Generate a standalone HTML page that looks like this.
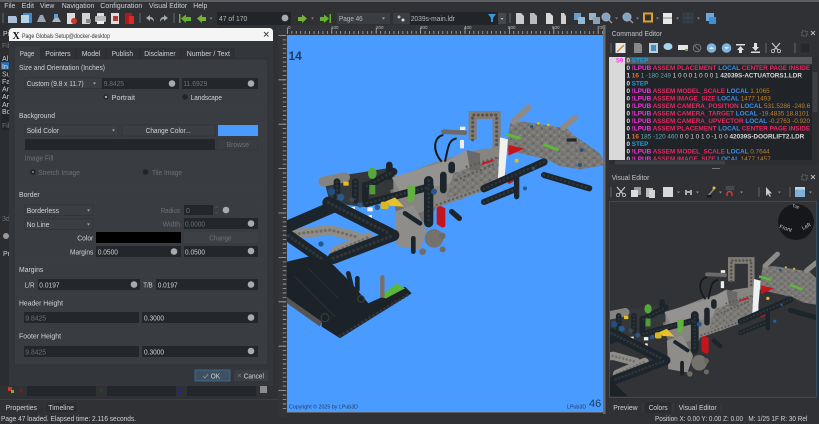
<!DOCTYPE html>
<html><head><meta charset="utf-8"><style>
html,body{margin:0;padding:0;background:#2f3135;overflow:hidden}
svg{display:block;filter:blur(.25px)}
text{font-family:"Liberation Sans",sans-serif;white-space:pre}
.t{font-size:7px;fill:#d0d3d6}
.d{font-size:7px;fill:#6e7175}
.s{font-size:7.2px;fill:#b9bcbf}
.f{fill:#23262a}
.b{fill:#3b3e43;stroke:#2c2e32;stroke-width:.5}
.g{fill:none;stroke:#3d4045;stroke-width:.6}
.c{font-family:"Liberation Sans",sans-serif;font-size:6.35px;font-weight:bold}
.m{fill:#ff30e0}.r{fill:#e8285f}.l{fill:#3f8fe8}.o{fill:#c0802f}.w{fill:#d8dadc}.n{fill:#6aa5b5}.y{fill:#1e9fe0}
.dk{fill:none;stroke:#1c252b;stroke-linecap:round}
.gy{fill:none;stroke:#85837f;stroke-linecap:round}
.hole{fill:none;stroke:#2f353a;stroke-linecap:round;stroke-dasharray:.1 13}
</style></head><body>
<svg width="819" height="424" viewBox="0 0 819 424" xmlns="http://www.w3.org/2000/svg">
<defs>
<clipPath id="pg"><rect x="287" y="35" width="316" height="377"/></clipPath>
<clipPath id="ve"><rect x="610" y="202" width="206" height="195"/></clipPath>
<clipPath id="ed"><rect x="609" y="57" width="203" height="103"/></clipPath>
<pattern id="mot" width="26" height="22" patternUnits="userSpaceOnUse"><rect x="2" y="3" width="7" height="6" fill="#636362"/><rect x="14" y="13" width="6" height="6" fill="#6a6a69"/><rect x="16" y="2" width="6" height="4" fill="#8f8e8b"/><rect x="4" y="14" width="5" height="5" fill="#8c8b88"/></pattern>
<g id="mR">
<polygon points="690,100 730,95 860,115 880,135 960,190 975,225 900,238 840,228 800,208 680,180" fill="#797874"/>
<polygon points="690,100 730,95 860,115 880,135 960,190 975,225 900,238 840,228 800,208 680,180" fill="url(#mot)"/>
<path class="dk" stroke-width="18" d="M792,255L928,295"/>
<path class="hole" stroke-width="8" d="M792,255L928,295"/>
<circle cx="905" cy="180" r="6" fill="#28547e"/><circle cx="900" cy="225" r="6" fill="#28547e"/>
<path stroke="#26292b" stroke-width="10" d="M860,150L890,150"/>
</g>
<g id="mM">
<path class="gy" stroke-width="18" d="M700,95L745,52M850,112L884,84" style="stroke:#8d8b87"/>
<polygon points="130,265 340,232 350,300 262,352 150,338" fill="#34383b"/>
<polygon points="330,300 470,260 520,300 470,350 440,400 350,370" fill="#6f6e6c"/>
<path fill="none" stroke="#817c75" stroke-width="24" d="M578,150V75H650V190"/>
<path class="hole" stroke-width="9" d="M578,150V75H650V190" style="stroke:#55514d"/>
<polygon points="340,265 470,215 590,180 660,170 680,260 560,310 470,350 400,375 340,330" fill="#868582"/>
<polygon points="335,262 500,213 560,180 595,195 600,255 510,280 365,312" fill="#949391"/>
<polygon points="520,250 660,200 665,262 540,330 500,320" fill="#7b7a76"/>
<polygon points="520,250 660,200 680,262 540,330 500,320" fill="url(#mot)"/>
<polygon points="560,180 600,190 600,240 570,240" fill="#6a6967"/>
<path class="gy" stroke-width="14" d="M490,125L555,128" style="stroke:#6c6b69"/>
<rect x="540" y="110" width="16" height="10" fill="#eee"/>
<rect x="540" y="150" width="12" height="25" fill="#eee"/>
<path d="M485,215C455,180 462,140 490,135M495,215C505,170 505,150 530,145" fill="none" stroke="#14191c" stroke-width="6"/>
<path class="gy" stroke-width="14" d="M470,345L640,285"/>
<path class="hole" stroke-width="7" d="M470,345L640,285M530,270L650,220M560,230L660,200" style="stroke:#5a5a58"/>
<polygon points="660,142 684,148 674,262 654,266" fill="#eff0f0"/>
<polygon points="685,165 733,176 685,197" fill="#c6141c"/>
<path stroke="#c01d22" stroke-width="6" d="M606,222L640,211"/>
<path stroke="#b2161c" stroke-width="10" d="M684,278L702,268"/>
<path stroke="#5fb83a" stroke-width="9" d="M678,133L722,145M790,163L836,180"/>
<path class="dk" stroke-width="22" d="M612,296L792,216"/>
<path class="dk" stroke-width="18" d="M612,336L705,298"/>
<path class="dk" stroke-width="16" d="M710,250V320M515,365L538,385"/>
<path class="hole" stroke-width="8" d="M612,296L792,216M612,336L705,298"/>
<circle cx="760" cy="235" r="5" fill="#28547e"/><circle cx="735" cy="295" r="6" fill="#1f5f96"/><circle cx="755" cy="110" r="5" fill="#28547e"/>
<circle cx="710" cy="212" r="6" fill="#e0bb20"/><circle cx="775" cy="100" r="4" fill="#e0bb20"/><circle cx="805" cy="105" r="4" fill="#e0bb20"/>
<path class="gy" stroke-width="30" d="M130,275L195,262"/>
<path class="dk" stroke-width="22" d="M261,288L341,245"/>
<path class="dk" stroke-width="22" d="M261,340L451,290"/>
<path class="dk" stroke-width="28" d="M446,272V398"/>
<path class="dk" stroke-width="20" d="M171,275V330M226,275V330M256,285V330M328,225V260M515,225V240M490,255V300"/>
<path class="hole" stroke-width="8" d="M261,288L341,245M261,340L451,290M446,272V398M171,275V330M226,275V330"/>
<ellipse cx="277" cy="250" rx="13" ry="17" fill="#56a83a"/><rect x="268" y="285" width="18" height="28" fill="#4f9d35"/>
<path fill="#5fb140" d="M382,288h24v20l-6,28h-16z"/>
<polygon points="315,335 345,322 372,350 330,348" fill="#e7c12b"/>
<rect x="302" y="335" width="24" height="22" rx="6" fill="#d9b81f"/>
<rect x="190" y="275" width="16" height="12" fill="#e3bd22"/><rect x="360" y="382" width="14" height="18" fill="#e3bd22"/>
<polygon points="205,352 225,350 225,368 208,368" fill="#f1f1f1"/><rect x="262" y="352" width="16" height="12" fill="#f1f1f1"/><rect x="266" y="375" width="10" height="24" fill="#eee"/>
<circle cx="155" cy="305" r="11" fill="#234f7c"/><circle cx="182" cy="322" r="11" fill="#2a5a8a"/><circle cx="240" cy="345" r="8" fill="#2a5a8a"/><circle cx="292" cy="352" r="8" fill="#2a5a8a"/><circle cx="123" cy="462" r="8" fill="#1f5a96"/><circle cx="462" cy="305" r="9" fill="#27568a"/><circle cx="215" cy="330" r="8" fill="#3a4a55"/>
<polygon points="345,365 400,345 440,420 420,480 350,468" fill="#8e8d8a"/>
<path class="dk" stroke-width="14" d="M400,445V485M375,370L420,400"/>
<circle cx="462" cy="445" r="28" fill="#75726e"/><circle cx="487" cy="438" r="10" fill="#6d6a66"/><circle cx="488" cy="478" r="9" fill="#6d6a66"/><circle cx="428" cy="485" r="10" fill="#706d68"/>
<path d="M470,358Q470,348 482,348L496,355V405Q496,414 485,412L470,402Z" fill="#c4141e"/>
<path class="gy" stroke-width="30" d="M45,432L151,420L235,442M165,485L265,442" style="stroke:#8f8d88"/>
<path class="hole" stroke-width="9" d="M45,432L151,420L235,442M165,485L265,442" style="stroke:#6f6d69"/>
<path class="dk" stroke-width="36" d="M10,415L161,350"/>
<path class="dk" stroke-width="36" d="M145,338L331,432"/>
<path class="dk" stroke-width="34" d="M160,505L341,436"/>
<path class="dk" stroke-width="34" d="M15,430L130,510"/>
<path class="hole" stroke-width="10" d="M145,338L331,432M160,505L341,436M15,430L130,510"/>
</g>
<g id="model" transform="translate(280 90) scale(.3333)">
<use href="#mR"/>
<use href="#mM"/>
<polygon points="0,520 85,500 150,515 215,580 265,640 375,590 395,610 180,745 125,710 125,695 0,610" fill="#1b2329"/>
<path stroke="#2b3237" stroke-width="3" d="M85,535L175,625M45,560L165,680"/>
<polygon points="5,610 125,695 120,710 0,625" fill="#555"/>
<path class="hole" stroke-width="9" d="M180,738L390,610"/>
<circle cx="135" cy="683" r="12" fill="none" stroke="#39424a" stroke-width="3"/><circle cx="243" cy="627" r="10" fill="none" stroke="#39424a" stroke-width="3"/>
<path class="dk" stroke-width="14" d="M232,565V600M205,550L215,590"/>
<polygon points="300,620 350,580 375,595 318,625" fill="#5ab53a"/>
<path stroke="#7b6f63" stroke-width="13" stroke-linecap="round" d="M307,562V617"/>
</g>
</defs>

<rect width="819" height="424" fill="#2f3135"/>
<rect width="819" height="2" fill="#5b5d60"/>

<!-- menu -->
<g>
<text class="t" x="4.300" y="8" textLength="11" lengthAdjust="spacingAndGlyphs">File</text><text class="t" x="21.700" y="8" textLength="12.300" lengthAdjust="spacingAndGlyphs">Edit</text><text class="t" x="40" y="8" textLength="14.300" lengthAdjust="spacingAndGlyphs">View</text><text class="t" x="61.700" y="8" textLength="32.700" lengthAdjust="spacingAndGlyphs">Navigation</text><text class="t" x="100.300" y="8" textLength="42" lengthAdjust="spacingAndGlyphs">Configuration</text><text class="t" x="149" y="8" textLength="38" lengthAdjust="spacingAndGlyphs">Visual Editor</text><text class="t" x="193.300" y="8" textLength="14" lengthAdjust="spacingAndGlyphs">Help</text>
</g>

<!-- main toolbar -->
<g>
<rect x="2" y="13" width="2" height="10" fill="#4a4d50"/>
<path d="M8,16h8l1,2v5H8z" fill="#a9c0d6"/>
<rect x="23" y="13" width="9" height="10" fill="#3f8ac8"/><rect x="21" y="15" width="8" height="8" fill="#b8d3e8"/>
<path d="M37,22l3-7h3l3,7z" fill="#9aa7b3"/><path d="M52,22l3-5h3l3,5z" fill="#a8b8c6"/><rect x="54" y="14" width="4" height="4" fill="#5fa0d0"/>
<rect x="67" y="13" width="8" height="11" fill="#ddd"/><circle cx="74" cy="21" r="3" fill="#d7352b"/>
<rect x="82" y="13" width="8" height="11" fill="#d4d4d4"/><rect x="86" y="19" width="5" height="4" fill="#888"/>
<rect x="95" y="16" width="11" height="6" rx="1" fill="#bbb"/><rect x="97" y="13" width="7" height="3" fill="#ddd"/><rect x="97" y="21" width="7" height="3" fill="#eee"/>
<rect x="111" y="13" width="8" height="11" fill="#ddd"/><rect x="113" y="16" width="5" height="5" fill="#b9383a"/>
<rect x="125" y="13" width="7" height="11" fill="#b01a1e"/><rect x="129" y="16" width="5" height="8" fill="#d92a2a"/>
<rect x="139" y="13" width="2" height="10" fill="#4a4d50"/>
<path d="M146,18l4-3v2c3,0 4,2 4,5c-1-2-2-3-4-3v2z" fill="#a8abae"/>
<path d="M168,18l-4-3v2c-3,0 -4,2 -4,5c1-2 2-3 4-3v2z" fill="#a8abae"/>
<rect x="173" y="13" width="2" height="10" fill="#4a4d50"/>
<rect x="179" y="14" width="1.500" height="9" fill="#66b32e"/><path d="M181,18.500l5-4v2.500h5v4h-5v2z" fill="#66b32e"/>
<path d="M197,18.500l5-4v2.500h4v4h-4v2z" fill="#74b62f"/><path d="M209.500,17.500h3l-1.500,2z" fill="#888"/>
<rect x="217" y="12" width="74" height="13" fill="#212428"/><text x="219" y="21" class="s" textLength="28.300" lengthAdjust="spacingAndGlyphs">47 of 170</text><circle cx="285" cy="18" r="3.400" fill="#a8abad"/>
<path d="M307,18.500l-5-4v2.500h-4v4h4v2z" fill="#74b62f"/><path d="M311,17.500h3l-1.500,2z" fill="#888"/>
<path d="M329,18.500l-5-4v2.500h-4v4h4v2z" fill="#66b32e"/><rect x="329.500" y="14" width="1.500" height="9" fill="#66b32e"/>
<rect x="337" y="13" width="53" height="11" fill="#3a3d41"/><text x="339" y="21" class="s" textLength="23.700" lengthAdjust="spacingAndGlyphs">Page 46</text><path d="M382,17.500h3l-1.500,2z" fill="#aaa"/>
<rect x="393" y="13" width="17" height="11" fill="#3a3d41"/><circle cx="399" cy="17" r="1.500" fill="#bbb"/><circle cx="403" cy="20" r="1.500" fill="#ddd"/>
<rect x="410" y="12" width="88" height="13" fill="#212428"/><text x="410.700" y="21" class="s" textLength="44.300" lengthAdjust="spacingAndGlyphs">2039s-main.ldr</text>
<path d="M488,14h8l-3,4v4h-2v-4z" fill="#3a9ad8"/>
<rect x="498" y="13" width="8" height="11" fill="#44474b"/><path d="M500.500,18h3l-1.500,2z" fill="#bbb"/>
<rect x="509" y="13" width="2" height="10" fill="#4a4d50"/>
<path d="M516,13h5l3,3v8h-8z" fill="#c9cccf"/><path d="M530,13h4l3,3v8h-7z" fill="#b8babc"/><path d="M546,13h4l3,3v8h-7z" fill="#d8d8d8"/><path d="M561,13h3l2,3v8h-5z" fill="#cfcfcf"/>
<rect x="574" y="13" width="7" height="7" fill="#6a9ec8"/><rect x="578" y="17" width="7" height="7" fill="#95b8d4"/>
<rect x="589" y="13" width="7" height="7" fill="#9ab2c8"/><rect x="593" y="17" width="7" height="7" fill="#8aa2b6"/>
<circle cx="606" cy="17" r="4" fill="#7fa5c5" stroke="#aab" stroke-width="1"/><path d="M609,20l3,3" stroke="#999" stroke-width="1.500"/><path d="M615,17.500h3l-1.500,2z" fill="#888"/>
<circle cx="627" cy="17" r="4" fill="#7fa5c5" stroke="#aab" stroke-width="1"/><path d="M630,20l3,3" stroke="#999" stroke-width="1.500"/><path d="M636,17.500h3l-1.500,2z" fill="#888"/>
<rect x="644" y="13.500" width="8" height="8" fill="none" stroke="#e0a030" stroke-width="2"/><path d="M656,17.500h3l-1.500,2z" fill="#888"/>
<rect x="663" y="13" width="9" height="11" fill="#e8e8e8"/><path d="M663,18h9" stroke="#888"/><path d="M676,17.500h3l-1.500,2z" fill="#888"/>
<rect x="683" y="13" width="10" height="10" fill="#2f3a45" stroke="#3c4650" stroke-width=".6"/><path d="M688,13v10M683,18h10" stroke="#3c4650"/><path d="M697,17.500h3l-1.500,2z" fill="#888"/>
<rect x="706" y="13" width="8" height="8" fill="#6fa8d8"/><rect x="709" y="17" width="7" height="7" fill="#3c90d8"/>
</g>

<!-- rulers -->
<rect x="278" y="25" width="327" height="9" fill="#323438"/>
<rect x="278" y="25" width="9" height="392" fill="#323438"/>
<line x1="287" y1="32.500" x2="604" y2="32.500" stroke="#a6a8aa" stroke-width="3" stroke-dasharray=".8 3.640"/>
<line x1="287" y1="30.500" x2="604" y2="30.500" stroke="#a6a8aa" stroke-width="6" stroke-dasharray=".8 43.600"/>
<line x1="284.500" y1="35" x2="284.500" y2="412" stroke="#a6a8aa" stroke-width="3.500" stroke-dasharray=".8 3.640"/>
<line x1="282" y1="35" x2="282" y2="412" stroke="#a6a8aa" stroke-width="7" stroke-dasharray=".8 43.600"/>
<g font-size="4.500" fill="#b8babc"><text x="288" y="29">0</text><text x="331" y="29">100</text><text x="376" y="29">200</text><text x="420" y="29">300</text><text x="464" y="29">400</text><text x="508" y="29">500</text><text x="552" y="29">600</text><text x="597" y="29">700</text></g>

<!-- page -->
<rect x="287" y="35" width="316" height="377" fill="#4a9bff"/>
<rect x="603" y="25" width="2.500" height="389" fill="#6a6c6f"/>
<rect x="287" y="412" width="318" height="1" fill="#5c5e60"/>
<text x="288.500" y="60" font-size="12" font-weight="bold" fill="#1d3d63">14</text>
<g clip-path="url(#pg)"><use href="#model"/></g>
<text x="289" y="408.500" font-size="5.300" fill="#1d3d63">Copyright © 2025 by LPub3D</text>
<text x="567" y="408.500" font-size="5.300" fill="#1d3d63">LPub3D</text>
<text x="589" y="407" font-size="11" fill="#1d3d63">46</text>

<!-- left dock -->
<rect x="0" y="24" width="9" height="362" fill="#2b2d31"/>
<text x="3" y="36" class="t">Pi</text>
<text x="2" y="48" class="d">Fil</text>
<rect x="1" y="58" width="8" height="72" fill="#212428"/>
<rect x="1" y="62" width="8" height="7.500" fill="#2a6db0"/>
<text x="2" y="61" class="t">Al</text><text x="2" y="69" class="t" style="fill:#eee">In</text><text x="2" y="76.500" class="t">Su</text><text x="2" y="84" class="t">Fa</text><text x="2" y="91.500" class="t">Ar</text><text x="2" y="99" class="t">Ar</text><text x="2" y="107" class="t">Ar</text><text x="2" y="114" class="t">Bo</text>
<text x="2" y="128" class="d">Fil</text>
<text x="2" y="221" class="d">3d</text>
<circle cx="6" cy="236" r="3" fill="#999"/>
<text x="3" y="256" class="t">Pr</text>

<!-- dialog -->
<rect x="9" y="28" width="264" height="358" fill="#33363b"/>
<path d="M9,41V32q0-4 4-4h256q4,0 4,4v9z" fill="#f5f5f5"/>
<text x="22" y="37.800" font-size="6" fill="#333" textLength="88" lengthAdjust="spacingAndGlyphs">Page Globals Setup@docker-desktop</text>
<text x="12.500" y="39" font-size="10" font-weight="bold" style="font-family:'Liberation Serif',serif" fill="#111">X</text>
<path d="M264,32l4.500,4.500M268.500,32l-4.500,4.500" stroke="#444" stroke-width=".9"/>
<!-- tabs -->
<rect x="14" y="59" width="254" height="306" fill="#393c41" stroke="#2c2e32" stroke-width=".6"/>
<rect x="40" y="48" width="195" height="11" fill="#2f3135"/>
<rect x="15" y="47" width="25" height="12.500" fill="#393c41"/>
<path d="M76,49v10M106,49v10M140,49v10M181,49v10" stroke="#26282b" stroke-width=".6"/>
<text x="19.700" y="56" class="t" textLength="14.700" lengthAdjust="spacingAndGlyphs">Page</text><text x="45.300" y="56" class="t" textLength="25.300" lengthAdjust="spacingAndGlyphs">Pointers</text><text x="81.700" y="56" class="t" textLength="18.700" lengthAdjust="spacingAndGlyphs">Model</text><text x="111.700" y="56" class="t" textLength="21.300" lengthAdjust="spacingAndGlyphs">Publish</text><text x="144.300" y="56" class="t" textLength="31.300" lengthAdjust="spacingAndGlyphs">Disclaimer</text><text x="186.700" y="56" class="t" textLength="43.300" lengthAdjust="spacingAndGlyphs">Number / Text</text>

<!-- size -->
<text x="19" y="70" class="t" textLength="86" lengthAdjust="spacingAndGlyphs">Size and Orientation (Inches)</text>
<rect x="19" y="74" width="245" height="32" class="g"/>
<rect x="25" y="78" width="77" height="10.500" class="b"/><text x="26.700" y="86" class="t" textLength="57" lengthAdjust="spacingAndGlyphs">Custom (9.8 x 11.7)</text><path d="M93,82.500h3l-1.500,2z" fill="#aaa"/>
<rect x="102" y="78" width="77" height="11" class="f"/><text x="103.700" y="86" class="d" textLength="20.300" lengthAdjust="spacingAndGlyphs">9.8425</text><circle cx="172" cy="83.500" r="3.300" fill="#a8abad"/>
<rect x="182" y="78" width="76" height="11" class="f"/><text x="183.300" y="86" class="d" textLength="24" lengthAdjust="spacingAndGlyphs">11.6929</text><circle cx="251" cy="83.500" r="3.300" fill="#a8abad"/>
<circle cx="106" cy="97" r="2.600" fill="#222528"/><circle cx="106" cy="97" r="1.200" fill="#aaa"/><text x="111.700" y="100" class="t" textLength="23.300" lengthAdjust="spacingAndGlyphs">Portrait</text>
<circle cx="185" cy="97" r="2.800" fill="#222528"/><text x="190.700" y="100" class="t" textLength="31.300" lengthAdjust="spacingAndGlyphs">Landscape</text>

<!-- background -->
<text x="19" y="118" class="t" textLength="36" lengthAdjust="spacingAndGlyphs">Background</text>
<rect x="19" y="122" width="245" height="65" class="g"/>
<rect x="25" y="125" width="93" height="11" class="b"/><text x="26.700" y="133" class="t" textLength="32.300" lengthAdjust="spacingAndGlyphs">Solid Color</text><path d="M112,129.500h3l-1.500,2z" fill="#aaa"/>
<rect x="122" y="125" width="93" height="11" class="b"/><text x="145.700" y="133" class="t" textLength="45" lengthAdjust="spacingAndGlyphs">Change Color...</text>
<rect x="218" y="125" width="40" height="11" fill="#4a9bff"/>
<rect x="25" y="139" width="190" height="11" class="f"/>
<rect x="217" y="139" width="41" height="11" fill="#393c41" stroke="#2f3135" stroke-width=".5"/><text x="226.700" y="147" class="d" textLength="22.300" lengthAdjust="spacingAndGlyphs">Browse</text>
<text x="24.700" y="160.500" class="d" textLength="28.700" lengthAdjust="spacingAndGlyphs">Image Fill</text>
<circle cx="33" cy="172" r="2.800" fill="#222528"/><circle cx="33" cy="172" r="1.100" fill="#777"/><text x="38.300" y="175" class="d" textLength="41.700" lengthAdjust="spacingAndGlyphs">Stretch Image</text>
<circle cx="145.500" cy="172" r="2.800" fill="#222528"/><text x="152" y="175" class="d" textLength="30" lengthAdjust="spacingAndGlyphs">Tile Image</text>

<!-- border -->
<text x="19" y="197" class="t" textLength="20.700" lengthAdjust="spacingAndGlyphs">Border</text>
<rect x="19" y="200" width="245" height="60" class="g"/>
<rect x="25" y="205" width="68" height="10.500" class="b"/><text x="26.700" y="213" class="t" textLength="32.300" lengthAdjust="spacingAndGlyphs">Borderless</text><path d="M87,209.500h3l-1.500,2z" fill="#aaa"/>
<rect x="25" y="219" width="68" height="10.500" class="b"/><text x="26.700" y="227" class="t" textLength="22.700" lengthAdjust="spacingAndGlyphs">No Line</text><path d="M87,223.500h3l-1.500,2z" fill="#aaa"/>
<text x="160.700" y="213" class="d" textLength="19.300" lengthAdjust="spacingAndGlyphs">Radius</text><rect x="184" y="205" width="29" height="10" class="f"/><text x="186" y="213" class="d">0</text><path d="M215,208l1.500-1.500 1.500,1.500M215,212l1.500,1.500 1.500-1.500" fill="none" stroke="#666" stroke-width=".5"/><circle cx="226" cy="210" r="3.300" fill="#a8abad"/>
<text x="162.700" y="226.500" class="d" textLength="17.300" lengthAdjust="spacingAndGlyphs">Width</text><rect x="184" y="218" width="74" height="11" class="f"/><text x="185" y="226.500" class="d" textLength="20" lengthAdjust="spacingAndGlyphs">0.0000</text><circle cx="251" cy="223.500" r="3.300" fill="#a8abad"/>
<text x="77.300" y="240.500" class="t" textLength="16" lengthAdjust="spacingAndGlyphs">Color</text><rect x="96" y="232" width="85" height="11" fill="#000"/>
<rect x="184" y="232" width="74" height="11" fill="#3d4045"/><text x="209.300" y="240.500" class="d" textLength="22.300" lengthAdjust="spacingAndGlyphs">Change</text>
<text x="70" y="254.500" class="t" textLength="23.300" lengthAdjust="spacingAndGlyphs">Margins</text><rect x="96" y="246" width="85" height="11" class="f"/><text x="97.700" y="254.500" class="t" textLength="20.300" lengthAdjust="spacingAndGlyphs">0.0500</text><circle cx="174" cy="251.500" r="3.300" fill="#a8abad"/>
<rect x="184" y="246" width="74" height="11" class="f"/><text x="185" y="254.500" class="t" textLength="20" lengthAdjust="spacingAndGlyphs">0.0500</text><circle cx="251" cy="251" r="3.300" fill="#a8abad"/>

<!-- margins -->
<text x="19" y="272" class="t" textLength="24.300" lengthAdjust="spacingAndGlyphs">Margins</text>
<rect x="19" y="275" width="245" height="20" class="g"/>
<text x="24.700" y="287.500" class="t" textLength="10" lengthAdjust="spacingAndGlyphs">L/R</text><rect x="38" y="279" width="102" height="11" class="f"/><text x="39.300" y="287.500" class="t" textLength="20.300" lengthAdjust="spacingAndGlyphs">0.0197</text><circle cx="134" cy="284.500" r="3.300" fill="#a8abad"/>
<text x="143.300" y="287.500" class="t" textLength="9.300" lengthAdjust="spacingAndGlyphs">T/B</text><rect x="156" y="279" width="102" height="11" class="f"/><text x="157.700" y="287.500" class="t" textLength="20" lengthAdjust="spacingAndGlyphs">0.0197</text><circle cx="251" cy="284.500" r="3.300" fill="#a8abad"/>

<text x="19" y="305.500" class="t" textLength="44" lengthAdjust="spacingAndGlyphs">Header Height</text>
<rect x="19" y="308" width="245" height="20" class="g"/>
<rect x="24" y="312" width="115" height="11" class="f"/><text x="25.300" y="320.500" class="d" textLength="20.700" lengthAdjust="spacingAndGlyphs">9.8425</text>
<rect x="142" y="312" width="116" height="11" class="f"/><text x="144" y="320.500" class="t" textLength="20" lengthAdjust="spacingAndGlyphs">0.3000</text><circle cx="251" cy="317.500" r="3.300" fill="#a8abad"/>
<text x="19" y="338.500" class="t" textLength="42" lengthAdjust="spacingAndGlyphs">Footer Height</text>
<rect x="19" y="342" width="245" height="20" class="g"/>
<rect x="24" y="346" width="115" height="11" class="f"/><text x="25.300" y="354.500" class="d" textLength="20.700" lengthAdjust="spacingAndGlyphs">9.8425</text>
<rect x="142" y="346" width="116" height="11" class="f"/><text x="144" y="354.500" class="t" textLength="20" lengthAdjust="spacingAndGlyphs">0.3000</text><circle cx="251" cy="351" r="3.300" fill="#a8abad"/>

<!-- ok/cancel -->
<rect x="195" y="370" width="35" height="11" fill="#3f5060" stroke="#3d7297" stroke-width=".8"/><path d="M203,376l2,2 3-4" fill="none" stroke="#8f9aa3" stroke-width=".8"/><text x="210.700" y="378.500" class="t" textLength="9.300" lengthAdjust="spacingAndGlyphs">OK</text>
<rect x="234" y="370" width="34" height="11" fill="#3b3e43"/><path d="M238,374l3,3M241,374l-3,3" stroke="#777" stroke-width=".7"/><text x="243.700" y="378.500" class="t" textLength="20.300" lengthAdjust="spacingAndGlyphs">Cancel</text>

<!-- xyz row -->
<rect x="8" y="387" width="4" height="4" fill="#c33"/><rect x="11" y="390" width="3" height="3" fill="#8a3"/>
<text x="19" y="393" font-size="6" fill="#b01515">X</text><rect x="27" y="386" width="69" height="10" fill="#23262a"/>
<text x="99" y="393" font-size="6" fill="#157015">Y</text><rect x="107" y="386" width="69" height="10" fill="#23262a"/>
<text x="178" y="393" font-size="6" fill="#1520c0">Z</text><rect x="187" y="386" width="69" height="10" fill="#23262a"/>
<rect x="260" y="386" width="7" height="7" fill="#8a8c8e"/>

<!-- bottom left tabs + status -->
<rect x="0" y="399" width="278" height="1" fill="#3a3d41"/>
<rect x="45" y="402" width="33" height="11" fill="#2a2c30" stroke="#3e4145" stroke-width=".5"/>
<text x="5.700" y="410" class="t" textLength="31.300" lengthAdjust="spacingAndGlyphs">Properties</text><text x="48.300" y="410" class="t" textLength="25.700" lengthAdjust="spacingAndGlyphs">Timeline</text>
<text x="1" y="421" class="t" textLength="135" lengthAdjust="spacingAndGlyphs">Page 47 loaded. Elapsed time: 2.116 seconds.</text>

<!-- Command Editor -->
<text x="611.700" y="36" font-size="7.200" fill="#c0c3c6" textLength="50.300" lengthAdjust="spacingAndGlyphs">Command Editor</text>
<rect x="802" y="31" width="5" height="5" fill="none" stroke="#888" stroke-width=".8" stroke-dasharray="1.500 1"/>
<path d="M811,31l4,4M815,31l-4,4" stroke="#bbb" stroke-width=".9"/>
<rect x="610" y="43" width="2" height="10" fill="#4a4d50"/>
<rect x="615.500" y="43" width="10" height="10" fill="#e8e8e8"/><path d="M617,52l7-7" stroke="#d08a30" stroke-width="1.500"/>
<path d="M634,43h6l2,2v8h-8z" fill="#888"/><rect x="649" y="43" width="9" height="10" fill="#b8d0e0"/><rect x="651" y="45" width="5" height="6" fill="#4a8ab8"/>
<ellipse cx="668" cy="46.500" rx="4.500" ry="3.500" fill="#a9d4f0"/>
<rect x="678" y="45" width="10" height="5" fill="#e4e4e4"/><rect x="685" y="49" width="3" height="2" fill="#6a3"/>
<circle cx="697" cy="48" r="3.800" fill="none" stroke="#777" stroke-width="1"/><path d="M694.500,45.500l5,5" stroke="#777"/>
<circle cx="711.500" cy="48" r="4.800" fill="#7fb4e0"/><path d="M709,49l2.500-2.500 2.500,2.500z" fill="#dbeaf5"/>
<circle cx="726.500" cy="48" r="4.800" fill="#7fb4e0"/><path d="M724,47l2.500,2.500 2.500-2.500z" fill="#dbeaf5"/>
<path d="M736,44h9v1.500h-9zM737,50l3.500-4 3.500,4h-2v3h-3v-3z" fill="#e0e0e0"/>
<path d="M751,53h9v-1.500h-9zM752,47l3.500,4 3.500-4h-2v-4h-3v4z" fill="#e0e0e0"/>
<rect x="765" y="43" width="2" height="10" fill="#4a4d50"/>
<path d="M772,43l6,7M780,43l-6,7" stroke="#c4c6c8" stroke-width="1.200"/><circle cx="773" cy="51" r="1.600" fill="none" stroke="#ccc" stroke-width=".8"/><circle cx="779" cy="51" r="1.600" fill="none" stroke="#ccc" stroke-width=".8"/>
<rect x="794" y="43" width="2" height="10" fill="#4a4d50"/>
<rect x="800" y="43" width="10" height="10" fill="#26282b" stroke="#3c3e42" stroke-width=".5"/>

<!-- editor -->
<rect x="609" y="57" width="203" height="103" fill="#202428"/>
<rect x="609" y="57" width="16" height="103" fill="#d9d9d9"/>
<rect x="625" y="57" width="187" height="7.300" fill="#57595c"/>
<rect x="812" y="57" width="6" height="103" fill="#2c2e32"/><rect x="812.500" y="72" width="5" height="40" fill="#3d4044"/>
<rect x="609" y="160" width="209" height="5" fill="#2c2e32"/><rect x="615" y="160.500" width="110" height="4" fill="#3d4044"/>
<text x="616" y="62.500" font-size="6.500" font-weight="bold" fill="#ff3fe5">59</text>
<g clip-path="url(#ed)">
<text y="62.500" x="626.500" class="c"><tspan class="w">0 </tspan><tspan class="y">STEP</tspan></text>
<text y="70" x="626.500" class="c"><tspan class="w">0 </tspan><tspan class="m">!LPUB </tspan><tspan class="r">ASSEM PLACEMENT </tspan><tspan class="l">LOCAL </tspan><tspan class="r">CENTER PAGE INSIDE 0 0</tspan></text>
<text y="77.700" x="626.500" class="c"><tspan class="w">1 </tspan><tspan style="fill:#e8742a">16 </tspan><tspan class="n" style="font-weight:normal">1 -180 249 </tspan><tspan class="w" style="font-weight:normal">1 0 0 0 1 0 0 0 1 </tspan><tspan class="w">42039S-ACTUATORS1.LDR</tspan></text>
<text y="85.300" x="626.500" class="c"><tspan class="w">0 </tspan><tspan class="y">STEP</tspan></text>
<text y="92.800" x="626.500" class="c"><tspan class="w">0 </tspan><tspan class="m">!LPUB </tspan><tspan class="r">ASSEM MODEL_SCALE </tspan><tspan class="l">LOCAL </tspan><tspan class="o" style="font-weight:normal">1.1065</tspan></text>
<text y="100.400" x="626.500" class="c"><tspan class="w">0 </tspan><tspan class="m">!LPUB </tspan><tspan class="r">ASSEM IMAGE_SIZE </tspan><tspan class="l">LOCAL </tspan><tspan class="o" style="font-weight:normal">1477 1493</tspan></text>
<text y="108" x="626.500" class="c"><tspan class="w">0 </tspan><tspan class="m">!LPUB </tspan><tspan class="r">ASSEM CAMERA_POSITION </tspan><tspan class="l">LOCAL </tspan><tspan class="o" style="font-weight:normal">531.5286 -249.6</tspan></text>
<text y="115.500" x="626.500" class="c"><tspan class="w">0 </tspan><tspan class="m">!LPUB </tspan><tspan class="r">ASSEM CAMERA_TARGET </tspan><tspan class="l">LOCAL </tspan><tspan class="o" style="font-weight:normal">-19.4835 18.8101</tspan></text>
<text y="123" x="626.500" class="c"><tspan class="w">0 </tspan><tspan class="m">!LPUB </tspan><tspan class="r">ASSEM CAMERA_UPVECTOR </tspan><tspan class="l">LOCAL </tspan><tspan class="o" style="font-weight:normal">-0.2763 -0.920</tspan></text>
<text y="130.700" x="626.500" class="c"><tspan class="w">0 </tspan><tspan class="m">!LPUB </tspan><tspan class="r">ASSEM PLACEMENT </tspan><tspan class="l">LOCAL </tspan><tspan class="r">CENTER PAGE INSIDE 0 0</tspan></text>
<text y="138.300" x="626.500" class="c"><tspan class="w">1 </tspan><tspan style="fill:#e8742a">16 </tspan><tspan class="n" style="font-weight:normal">185 -120 460 </tspan><tspan class="w" style="font-weight:normal">0 0 1 0 1 0 -1 0 0 </tspan><tspan class="w">42039S-DOORLIFT2.LDR</tspan></text>
<text y="145.800" x="626.500" class="c"><tspan class="w">0 </tspan><tspan class="y">STEP</tspan></text>
<text y="153.400" x="626.500" class="c"><tspan class="w">0 </tspan><tspan class="m">!LPUB </tspan><tspan class="r">ASSEM MODEL_SCALE </tspan><tspan class="l">LOCAL </tspan><tspan class="o" style="font-weight:normal">0.7644</tspan></text>
<text y="161" x="626.500" class="c"><tspan class="w">0 </tspan><tspan class="m">!LPUB </tspan><tspan class="r">ASSEM IMAGE_SIZE </tspan><tspan class="l">LOCAL </tspan><tspan class="o" style="font-weight:normal">1477 1457</tspan></text>
</g>
<rect x="712" y="168" width="8" height="1" fill="#777"/>

<!-- Visual Editor -->
<text x="611.700" y="180" font-size="7.200" fill="#c0c3c6" textLength="37.700" lengthAdjust="spacingAndGlyphs">Visual Editor</text>
<rect x="802" y="175" width="5" height="5" fill="none" stroke="#888" stroke-width=".8" stroke-dasharray="1.500 1"/>
<path d="M811,175l4,4M815,175l-4,4" stroke="#bbb" stroke-width=".9"/>
<rect x="610" y="187" width="2" height="10" fill="#4a4d50"/>
<path d="M617,187l6,7M625,187l-6,7" stroke="#c4c6c8" stroke-width="1.200"/><circle cx="618" cy="195" r="1.600" fill="none" stroke="#ccc" stroke-width=".8"/><circle cx="624" cy="195" r="1.600" fill="none" stroke="#ccc" stroke-width=".8"/>
<rect x="634" y="187" width="7" height="8" fill="#999"/><rect x="631" y="190" width="7" height="7" fill="#dcdcdc"/>
<rect x="646" y="188" width="7" height="9" fill="#bbb"/><rect x="649" y="190" width="6" height="8" fill="#d4d4d4"/>
<rect x="663" y="187" width="10" height="10" fill="#d8d8d8"/><path d="M677,191.500h3l-1.500,2z" fill="#888"/>
<path d="M685,190h2v5h-2zM690,190h2v5h-2zM687,191h3v2h-3z" fill="#a8abad"/><path d="M696,191.500h3l-1.500,2z" fill="#888"/>
<path d="M708,196l6-7" stroke="#888" stroke-width="1.500"/><circle cx="714" cy="188" r="1.500" fill="#e0c030"/><rect x="707" y="195" width="5" height="2.500" fill="#181a1c"/><path d="M719,191.500h3l-1.500,2z" fill="#888"/>
<rect x="726" y="186" width="8" height="4" fill="#44474b" stroke="#666" stroke-width=".4" stroke-dasharray="1 1"/><path d="M727,196v-2a2.500,2.500 0 0 1 5,0v2" fill="none" stroke="#d33" stroke-width="1.500"/><path d="M740,191.500h3l-1.500,2z" fill="#888"/>
<rect x="758" y="187" width="2" height="10" fill="#4a4d50"/>
<path d="M766,187v9l2-2 2,3 1-1-2-2.500h3z" fill="#c8cacc"/><path d="M778,191.500h3l-1.500,2z" fill="#777"/>
<rect x="789" y="187" width="2" height="10" fill="#4a4d50"/>
<rect x="795" y="187" width="10" height="10" fill="#7fb0d8"/><rect x="795" y="187" width="10" height="2.500" fill="#bcd6ea"/><path d="M809,191.500h3l-1.500,2z" fill="#888"/>

<rect x="609.500" y="201.500" width="207" height="196" fill="#323336" stroke="#28587a" stroke-width=".8"/>
<g clip-path="url(#ve)"><g transform="translate(339 165) scale(.83) translate(280 90) scale(.3333)">
<polygon points="690,100 730,95 860,115 880,135 893,145 893,236 840,228 800,208 680,180" fill="#797874"/>
<polygon points="690,100 730,95 860,115 880,135 893,145 893,236 840,228 800,208 680,180" fill="url(#mot)"/>
<path class="dk" stroke-width="18" d="M792,255L885,282"/>
<use href="#mM"/>
<polygon points="0,520 85,500 150,515 204,566 0,566" fill="#1b2329"/>
</g></g>
<circle cx="796" cy="222" r="18" fill="#16171a"/>
<text font-size="5.500" fill="#c8cacc" transform="translate(779,228) rotate(18)">Front</text>
<text font-size="5.500" fill="#c8cacc" transform="translate(803,230) rotate(-28)">Left</text>
<text font-size="4.500" fill="#c8cacc" transform="translate(792,207) rotate(12)">Top</text>

<!-- right tabs/status -->
<rect x="645" y="402" width="26" height="11" fill="#2a2c30"/>
<text x="613.300" y="410" class="t" textLength="24.300" lengthAdjust="spacingAndGlyphs">Preview</text><text x="648.700" y="410" class="t" textLength="19" lengthAdjust="spacingAndGlyphs">Colors</text><text x="678.700" y="410" class="t" textLength="38" lengthAdjust="spacingAndGlyphs">Visual Editor</text>
<path d="M643,403v10M673,403v10M721,403v10" stroke="#3e4145" stroke-width=".6"/>
<text x="655" y="421" class="t" textLength="152.300" lengthAdjust="spacingAndGlyphs">Position X: 0.00 Y: 0.00 Z: 0.00   M: 1/25 1F R: 30 Rel</text>
</svg>
</body></html>
